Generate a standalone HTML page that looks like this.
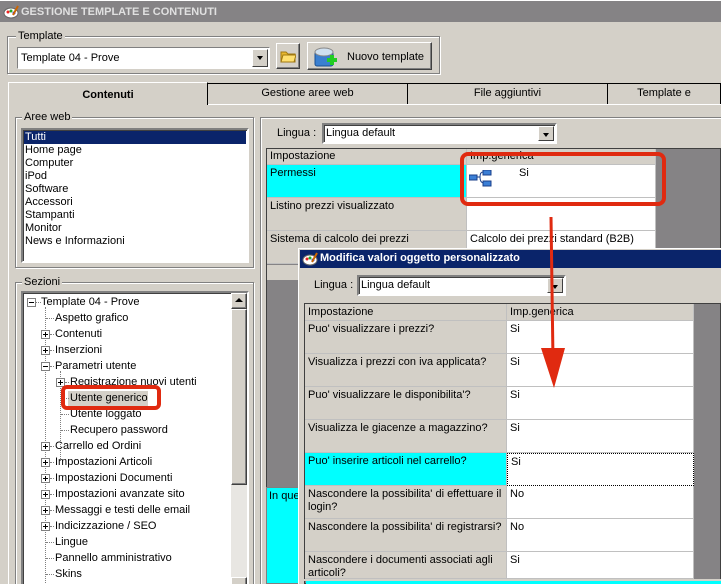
<!DOCTYPE html>
<html style="overflow:hidden;width:721px;height:584px"><head><meta charset="utf-8"><style>
*{box-sizing:border-box;margin:0;padding:0}
body{width:721px;height:584px;overflow:hidden;background:#d4d0c8;font-family:"Liberation Sans",sans-serif;font-size:11px;color:#000;position:relative}
.a{position:absolute}
.grp{position:absolute;border:1px solid #808080;box-shadow:inset 1px 1px 0 #fff,1px 1px 0 #fff}
.lbl{position:absolute;background:#d4d0c8;padding:0 2px;top:-7px;left:6px;line-height:13px}
.sunk{position:absolute;background:#fff;border:2px solid;border-color:#808080 #fff #fff #808080;box-shadow:inset 1px 1px 0 #404040}
.btn{position:absolute;background:#d4d0c8;border:1px solid;border-color:#fff #404040 #404040 #fff;box-shadow:inset -1px -1px 0 #808080}
.dd{position:absolute;right:1px;top:1px;width:16px;bottom:1px;background:#d4d0c8;border:1px solid;border-color:#fff #404040 #404040 #fff}
.dd:after{content:"";position:absolute;left:4px;top:6px;border:3.5px solid transparent;border-top:4px solid #000}
.tab{position:absolute;top:83px;height:21px;border:1px solid #000;border-bottom:none;text-align:center;line-height:19px;background:#d4d0c8}
.cell{position:absolute;border-right:1px solid #c0c0c0;border-bottom:1px solid #c0c0c0;padding:2px 3px;line-height:13px}
.tr{position:absolute;white-space:nowrap;line-height:13px}
.h{position:absolute;height:0;border-top:1px dotted #808080}
.pm{position:absolute;width:9px;height:9px;border:1px solid #808080;background:#fff}
.pm:before{content:"";position:absolute;left:1px;top:3px;width:5px;height:1px;background:#000}
.pm.p:after{content:"";position:absolute;left:3px;top:1px;width:1px;height:5px;background:#000}
</style></head><body>
<div class="a" style="left:0;top:0;width:721px;height:1px;background:#fff"></div>
<div class="a" style="left:0;top:1px;width:721px;height:21px;background:#858385"></div>
<svg class="a" style="left:3px;top:5px" width="16" height="14"><ellipse cx="8" cy="8" rx="7" ry="5" fill="#fff" stroke="#666"/><circle cx="5" cy="7" r="1.5" fill="#e22"/><circle cx="8" cy="6" r="1.5" fill="#2a2"/><circle cx="11" cy="8" r="1.5" fill="#22e"/><line x1="10" y1="10" x2="15" y2="1" stroke="#c60" stroke-width="2"/></svg>
<div class="a" style="left:21px;top:6px;color:#e0e0e0;font-weight:bold;font-size:11px">GESTIONE TEMPLATE E CONTENUTI</div>

<div class="grp" style="left:7px;top:36px;width:433px;height:38px"><span class="lbl" style="left:8px">Template</span></div>
<div class="sunk" style="left:17px;top:47px;width:253px;height:22px;box-shadow:none;border:1px solid;border-color:#808080 #fff #fff #808080"><div class="a" style="left:3px;top:4px">Template 04 - Prove</div><div class="dd"></div></div>
<div class="btn" style="left:276px;top:43px;width:24px;height:26px"><svg class="a" style="left:3px;top:4px" width="16" height="15"><path d="M1 4h5l2 2h7v8H1z" fill="#e8b830" stroke="#a07810"/><path d="M3 7h13l-2 7H1z" fill="#ffe070" stroke="#a07810"/></svg></div>
<div class="btn" style="left:307px;top:42px;width:125px;height:28px"><svg class="a" style="left:4px;top:2px" width="26" height="24"><rect x="3" y="7" width="18" height="14" rx="2" fill="#3a7fd0" stroke="#1a4f90"/><ellipse cx="12" cy="7" rx="9" ry="4" fill="#cfe0f0" stroke="#888"/><rect x="15" y="13" width="10" height="4" fill="#2c2"/><rect x="18" y="10" width="4" height="10" fill="#2c2"/></svg><div class="a" style="left:39px;top:8px">Nuovo template</div></div>

<div class="a" style="left:8px;top:103px;width:713px;height:1px;background:#000"></div>
<div class="a" style="left:8px;top:104px;width:713px;height:1px;background:#fff"></div>
<div class="tab" style="left:207px;width:201px">Gestione aree web</div>
<div class="tab" style="left:407px;width:201px">File aggiuntivi</div>
<div class="tab" style="left:607px;width:114px">Template e</div>
<div class="tab" style="left:8px;top:82px;width:200px;height:23px;font-weight:bold;line-height:25px;border-color:#fff #000 transparent #fff">Contenuti</div>
<div class="a" style="left:8px;top:103px;width:1px;height:481px;background:#fff"></div>

<div class="grp" style="left:15px;top:117px;width:239px;height:151px"><span class="lbl">Aree web</span></div>
<div class="sunk" style="left:21px;top:128px;width:228px;height:135px">
<div class="a" style="left:1px;top:1px;width:222px;height:13px;background:#0a246a"></div>
<div class="tr" style="left:2px;top:1px;color:#fff">Tutti</div>
<div class="tr" style="left:2px;top:14px">Home page</div>
<div class="tr" style="left:2px;top:27px">Computer</div>
<div class="tr" style="left:2px;top:40px">iPod</div>
<div class="tr" style="left:2px;top:53px">Software</div>
<div class="tr" style="left:2px;top:66px">Accessori</div>
<div class="tr" style="left:2px;top:79px">Stampanti</div>
<div class="tr" style="left:2px;top:92px">Monitor</div>
<div class="tr" style="left:2px;top:105px">News e Informazioni</div>
</div>

<div class="grp" style="left:15px;top:282px;width:239px;height:302px;border-bottom:none"><span class="lbl">Sezioni</span></div>
<div class="sunk" style="left:21px;top:291px;width:228px;height:293px;border-bottom:none;overflow:hidden">
<div class="a" style="left:22px;top:14px;width:0;height:290px;border-left:1px dotted #808080"></div>
<div class="a" style="left:37px;top:78px;width:0;height:90px;border-left:1px dotted #808080"></div>
<div class="pm" style="left:4px;top:5px"></div><div class="h" style="left:13px;top:9px;width:5px"></div><div class="tr" style="left:18px;top:3px">Template 04 - Prove</div>
<div class="h" style="left:23px;top:25px;width:8px"></div><div class="tr" style="left:32px;top:19px">Aspetto grafico</div>
<div class="pm p" style="left:18px;top:37px"></div><div class="h" style="left:27px;top:41px;width:4px"></div><div class="tr" style="left:32px;top:35px">Contenuti</div>
<div class="pm p" style="left:18px;top:53px"></div><div class="h" style="left:27px;top:57px;width:4px"></div><div class="tr" style="left:32px;top:51px">Inserzioni</div>
<div class="pm" style="left:18px;top:69px"></div><div class="h" style="left:27px;top:73px;width:4px"></div><div class="tr" style="left:32px;top:67px">Parametri utente</div>
<div class="pm p" style="left:33px;top:85px"></div><div class="h" style="left:42px;top:89px;width:4px"></div><div class="tr" style="left:47px;top:83px">Registrazione nuovi utenti</div>
<div class="a" style="left:45px;top:98px;width:80px;height:15px;background:#d4d0c8"></div>
<div class="h" style="left:38px;top:105px;width:8px"></div><div class="tr" style="left:47px;top:99px">Utente generico</div>
<div class="h" style="left:38px;top:121px;width:8px"></div><div class="tr" style="left:47px;top:115px">Utente loggato</div>
<div class="h" style="left:38px;top:137px;width:8px"></div><div class="tr" style="left:47px;top:131px">Recupero password</div>
<div class="pm p" style="left:18px;top:149px"></div><div class="h" style="left:27px;top:153px;width:4px"></div><div class="tr" style="left:32px;top:147px">Carrello ed Ordini</div>
<div class="pm p" style="left:18px;top:165px"></div><div class="h" style="left:27px;top:169px;width:4px"></div><div class="tr" style="left:32px;top:163px">Impostazioni Articoli</div>
<div class="pm p" style="left:18px;top:181px"></div><div class="h" style="left:27px;top:185px;width:4px"></div><div class="tr" style="left:32px;top:179px">Impostazioni Documenti</div>
<div class="pm p" style="left:18px;top:197px"></div><div class="h" style="left:27px;top:201px;width:4px"></div><div class="tr" style="left:32px;top:195px">Impostazioni avanzate sito</div>
<div class="pm p" style="left:18px;top:213px"></div><div class="h" style="left:27px;top:217px;width:4px"></div><div class="tr" style="left:32px;top:211px">Messaggi e testi delle email</div>
<div class="pm p" style="left:18px;top:229px"></div><div class="h" style="left:27px;top:233px;width:4px"></div><div class="tr" style="left:32px;top:227px">Indicizzazione / SEO</div>
<div class="h" style="left:23px;top:249px;width:8px"></div><div class="tr" style="left:32px;top:243px">Lingue</div>
<div class="h" style="left:23px;top:265px;width:8px"></div><div class="tr" style="left:32px;top:259px">Pannello amministrativo</div>
<div class="h" style="left:23px;top:281px;width:8px"></div><div class="tr" style="left:32px;top:275px">Skins</div>
<div class="a" style="left:208px;top:0;width:16px;height:300px;background:#e8e6e2"></div>
<div class="btn" style="left:208px;top:0;width:16px;height:16px"><div class="a" style="left:3px;top:4px;border:4px solid transparent;border-bottom:4px solid #000;border-top:none;width:0"></div></div>
<div class="btn" style="left:208px;top:16px;width:16px;height:176px"></div>
<div class="btn" style="left:208px;top:284px;width:16px;height:16px"></div>
</div>

<div class="grp" style="left:260px;top:117px;width:461px;height:467px;border-right:none;border-bottom:none"></div>
<div class="a" style="left:277px;top:127px">Lingua :</div>
<div class="sunk" style="left:322px;top:123px;width:235px;height:21px"><div class="a" style="left:2px;top:2px">Lingua default</div><div class="dd"></div></div>
<div class="a" style="left:266px;top:148px;width:455px;height:340px;background:#858385;border:1px solid #404040"></div>
<div class="a" style="left:267px;top:265px;width:389px;height:15px;background:#d4d0c8"></div>
<div class="cell" style="left:267px;top:149px;width:200px;height:16px;background:#d4d0c8;padding-top:1px">Impostazione</div>
<div class="cell" style="left:467px;top:149px;width:189px;height:16px;background:#d4d0c8;padding-top:1px">Imp.generica</div>
<div class="cell" style="left:267px;top:165px;width:200px;height:33px;background:#00ffff">Permessi</div>
<div class="cell" style="left:467px;top:165px;width:189px;height:33px;background:#fff"><svg class="a" style="left:2px;top:5px" width="24" height="17"><rect x="0" y="5" width="8" height="5" fill="#3b7fd6" stroke="#1a3f8a"/><rect x="14" y="0" width="8" height="5" fill="#3b7fd6" stroke="#1a3f8a"/><rect x="14" y="11" width="8" height="5" fill="#3b7fd6" stroke="#1a3f8a"/><path d="M8 7h3M14 2q-3 0-3 5t3 6" fill="none" stroke="#1a3f8a"/></svg><span class="a" style="left:52px;top:2px">Si</span></div>
<div class="cell" style="left:267px;top:198px;width:200px;height:33px;background:#d4d0c8">Listino prezzi visualizzato</div>
<div class="cell" style="left:467px;top:198px;width:189px;height:33px;background:#fff"></div>
<div class="cell" style="left:267px;top:231px;width:200px;height:33px;background:#d4d0c8">Sistema di calcolo dei prezzi</div>
<div class="cell" style="left:467px;top:231px;width:189px;height:33px;background:#fff">Calcolo dei prezzi standard (B2B)</div>
<div class="a" style="left:266px;top:487px;width:35px;height:97px;background:#00ffff;border:1px solid #808080;padding:2px;white-space:nowrap;overflow:hidden">In que</div>

<div class="a" style="left:298px;top:248px;width:423px;height:336px;background:#d4d0c8;border-left:1px solid #fff;border-top:1px solid #fff"></div>
<div class="a" style="left:300px;top:250px;width:421px;height:18px;background:#0a246a"></div>
<svg class="a" style="left:302px;top:252px" width="16" height="14"><ellipse cx="8" cy="8" rx="7" ry="5" fill="#fff" stroke="#666"/><circle cx="5" cy="7" r="1.5" fill="#e22"/><circle cx="8" cy="6" r="1.5" fill="#2a2"/><circle cx="11" cy="8" r="1.5" fill="#22e"/><line x1="10" y1="10" x2="15" y2="1" stroke="#c60" stroke-width="2"/></svg>
<div class="a" style="left:320px;top:252px;color:#fff;font-weight:bold">Modifica valori oggetto personalizzato</div>
<div class="a" style="left:314px;top:279px">Lingua :</div>
<div class="sunk" style="left:357px;top:275px;width:209px;height:21px"><div class="a" style="left:2px;top:2px">Lingua default</div><div class="dd"></div></div>
<div class="a" style="left:304px;top:303px;width:417px;height:281px;background:#858385;border:1px solid #404040"></div>
<div class="cell" style="left:305px;top:304px;width:202px;height:17px;background:#d4d0c8;padding-top:2px">Impostazione</div>
<div class="cell" style="left:507px;top:304px;width:187px;height:17px;background:#d4d0c8;padding-top:2px">Imp.generica</div>
<div class="cell" style="left:305px;top:321px;width:202px;height:33px;background:#d4d0c8">Puo' visualizzare i prezzi?</div>
<div class="cell" style="left:507px;top:321px;width:187px;height:33px;background:#fff">Si</div>
<div class="cell" style="left:305px;top:354px;width:202px;height:33px;background:#d4d0c8">Visualizza i prezzi con iva applicata?</div>
<div class="cell" style="left:507px;top:354px;width:187px;height:33px;background:#fff">Si</div>
<div class="cell" style="left:305px;top:387px;width:202px;height:33px;background:#d4d0c8">Puo' visualizzare le disponibilita'?</div>
<div class="cell" style="left:507px;top:387px;width:187px;height:33px;background:#fff">Si</div>
<div class="cell" style="left:305px;top:420px;width:202px;height:33px;background:#d4d0c8">Visualizza le giacenze a magazzino?</div>
<div class="cell" style="left:507px;top:420px;width:187px;height:33px;background:#fff">Si</div>
<div class="cell" style="left:305px;top:453px;width:202px;height:33px;background:#00ffff">Puo' inserire articoli nel carrello?</div>
<div class="cell" style="left:507px;top:453px;width:187px;height:33px;background:#fff;border:1px dotted #000">Si</div>
<div class="cell" style="left:305px;top:486px;width:202px;height:33px;background:#d4d0c8">Nascondere la possibilita' di effettuare il login?</div>
<div class="cell" style="left:507px;top:486px;width:187px;height:33px;background:#fff">No</div>
<div class="cell" style="left:305px;top:519px;width:202px;height:33px;background:#d4d0c8">Nascondere la possibilita' di registrarsi?</div>
<div class="cell" style="left:507px;top:519px;width:187px;height:33px;background:#fff">No</div>
<div class="cell" style="left:305px;top:552px;width:202px;height:27px;background:#d4d0c8;overflow:hidden">Nascondere i documenti associati agli articoli?</div>
<div class="cell" style="left:507px;top:552px;width:187px;height:27px;background:#fff">Si</div>
<div class="a" style="left:304px;top:579px;width:417px;height:2px;background:#d4d0c8"></div>
<div class="a" style="left:306px;top:581px;width:415px;height:3px;background:#00ffff"></div>

<div class="a" style="left:460px;top:152px;width:206px;height:54px;border:4px solid #e02a10;border-radius:8px"></div>
<div class="a" style="left:61px;top:385px;width:100px;height:25px;border:4px solid #e02a10;border-radius:6px"></div>
<svg class="a" style="left:535px;top:215px" width="36" height="175"><path d="M16 2L18 145" stroke="#e02a10" stroke-width="3"/><path d="M6 133L30 133L19 173Z" fill="#e02a10"/></svg>
</body></html>
